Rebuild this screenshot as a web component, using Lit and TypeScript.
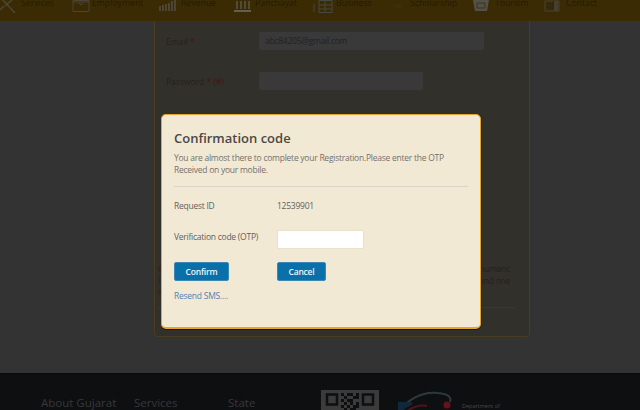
import { LitElement, html, css, svg } from "lit";
import { customElement } from "lit/decorators.js";

const NAV = [
  { label: "Services", iw: 17, icon: svg`<path d="M1 -2 L15 13 M14 -2 L5 6 M0 10 L4 6" fill="none" stroke="#4a4534" stroke-width="1.6"/>` },
  { label: "Employment", iw: 16, icon: svg`<path d="M1 0.5 H17 V11.5 H1 Z M1 2 H17 M7 3 L9 5 L11 3" fill="none" stroke="#4a4534"/>` },
  { label: "Revenue", iw: 18, icon: svg`<path d="M1 11V6 M4 11V5 M7 11V4 M10 11V3 M13 11V1 M16 11V0" fill="none" stroke="#514e40" stroke-width="1.6"/>` },
  { label: "Panchayat", iw: 17, icon: svg`<path d="M3 1V9 M7 1V9 M11 1V9 M15 1V9" fill="none" stroke="#57543f" stroke-width="1.6"/><path d="M0 11H17" stroke="#63604f" stroke-width="2"/>` },
  { label: "Business", iw: 20, icon: svg`<path d="M7 0.5H20V12.5H7Z M7 5H20 M13 0V13 M7 9H20 M2 4V12" fill="none" stroke="#474840"/>` },
  { label: "Scholarship", iw: 16, icon: svg`<path d="M3 6L8 3L13 6L8 9Z" fill="#3f2f07"/>` },
  { label: "Tourism", iw: 19, icon: svg`<path d="M1 0H17L15 11H3Z" fill="#535248"/><path d="M5 3H13V8H5Z" fill="none" stroke="#3c3518"/>` },
  { label: "Contact", iw: 18, icon: svg`<path d="M1 1H15V11H1Z" fill="none" stroke="#474534"/><path d="M9 1V9 M3 4H7 M3 7H7" stroke="#2a2616"/><path d="M10 1H14V11H10Z" fill="#443f2e"/>` },
];

const QR_CELLS = [
  [0,0],[2,0],[3,0],[5,0],[1,1],[4,1],[5,1],[0,2],[2,2],[3,2],[1,3],[3,3],[5,3],[0,4],[2,4],[4,4],[5,4],[1,5],[3,5],[4,5],
];

@customElement("app-root")
export class AppRoot extends LitElement {
  static styles = css`
    :host {
      display: block;
      width: 640px;
      height: 410px;
      font-family: "Open Sans", "Liberation Sans", sans-serif;
    }
    .page {
      position: relative;
      width: 640px;
      height: 410px;
      overflow: hidden;
      background: #333333;
      display: flex;
      flex-direction: column;
    }
    .nav {
      flex: none;
      height: 21px;
      overflow: hidden;
      background: #3b2b04;
      display: grid;
      grid-template-columns: 72px 87px 75px 78px 78px 82px 72px 96px;
    }
    .nav-item {
      display: flex;
      align-items: flex-start;
      gap: 4px;
      height: 14px;
      font-size: 8.7px;
      line-height: 7px;
      color: #221a07;
      white-space: nowrap;
    }
    .nav-item svg {
      flex: none;
      overflow: visible;
    }
    .main {
      flex: none;
      height: 352px;
      display: flex;
      justify-content: flex-start;
      padding-left: 154px;
    }
    .card {
      box-sizing: border-box;
      width: 376px;
      height: 316px;
      background: #32302b;
      border: 1px solid #4a3c1e;
      border-top: 0;
      border-radius: 0 0 4px 4px;
      padding: 11px 12px 0 11px;
      display: flex;
      flex-direction: column;
      color: #222120;
      font-size: 8.5px;
      letter-spacing: -0.25px;
    }
    .field {
      display: grid;
      grid-template-columns: 93px auto;
      justify-content: start;
      align-items: center;
      height: 18px;
      margin-bottom: 22px;
    }
    .field b {
      font-weight: 400;
      letter-spacing: 0;
    }
    .req {
      color: #451410;
    }
    .ghost-input {
      box-sizing: border-box;
      height: 18px;
      width: 225px;
      padding-left: 6px;
      line-height: 18px;
      border-radius: 2px;
      background: #393939;
      color: #222;
    }
    .ghost-input.short {
      width: 164px;
    }
    .notes {
      margin: 151px 0 0 -8px;
      width: 352px;
      line-height: 11.5px;
    }
    .note-line {
      display: flex;
      justify-content: space-between;
    }
    .card hr {
      margin: 9px 2px 0 -8px;
      border: 0;
      border-top: 1px solid #3a3832;
    }
    .footer {
      flex: 1;
      background: #0e0f11;
      border-top: 1px solid #0a0a0a;
      display: flex;
      align-items: flex-start;
      padding: 21px 0 0 41px;
      color: #38383a;
      font-size: 11.5px;
      line-height: 16px;
    }
    .f-col {
      white-space: nowrap;
    }
    .f-about { width: 93px; }
    .f-services { width: 94px; }
    .f-state { width: 93px; }
    .qr {
      flex: none;
      margin-top: -5px;
    }
    .logo {
      flex: none;
      margin-top: -5px;
      margin-left: 15px;
    }
    .dept {
      font-size: 5.5px;
      line-height: 8px;
      margin: 7px 0 0 0;
      color: #4a4a4a;
    }
    .scrim {
      position: absolute;
      inset: 0;
      display: flex;
      justify-content: center;
      align-items: flex-start;
      padding: 114px 0 0 1px;
      box-sizing: border-box;
    }
    .modal {
      box-sizing: border-box;
      width: 320px;
      height: 215px;
      background: #f2e9d5;
      border: 1px solid #e5a52c;
      border-bottom-width: 2px;
      border-radius: 5px;
      box-shadow: 0 1px 0 #141428, 1px 0 0 #2a2414;
      padding: 14px 12px 0 12.5px;
      color: #63605b;
      font-size: 8.5px;
      letter-spacing: -0.25px;
      line-height: 11.5px;
    }
    h2 {
      margin: 0;
      font-size: 13px;
      line-height: 19px;
      font-weight: 600;
      letter-spacing: 0;
      color: #4a4845;
    }
    .intro {
      margin: 4px 0 0;
      color: #75716b;
    }
    .modal hr {
      margin: 11px 0 0;
      border: 0;
      border-top: 1px solid #ddd2c8;
    }
    .form {
      display: grid;
      grid-template-columns: 103px 1fr;
      margin-top: 13px;
      align-items: start;
    }
    .id-row {
      height: 30px;
    }
    .otp-label {
      padding-top: 1px;
    }
    .code {
      box-sizing: border-box;
      display: block;
      width: 87px;
      height: 19px;
      background: #fff;
      border: 1px solid #e9dfcc;
      border-radius: 2px;
      padding: 0;
      margin: 0;
    }
    .btn-cell {
      margin-top: 13px;
    }
    button {
      box-sizing: border-box;
      display: block;
      height: 19px;
      padding: 0;
      border: 1px solid #3d87b4;
      border-radius: 2px;
      background: #0a70a9;
      color: #f4f4f4;
      font: 600 8.5px/17px "Open Sans", "Liberation Sans", sans-serif;
      letter-spacing: -0.2px;
      text-align: center;
    }
    .confirm { width: 55px; }
    .cancel { width: 49px; }
    .resend {
      display: block;
      margin-top: 9px;
      color: #5183b5;
      text-decoration: none;
    }
  `;

  private qr() {
    return html`<svg class="qr" width="58" height="25" viewBox="0 0 58 25">
      <rect width="58" height="25" fill="#3b3b3b"></rect>
      <path d="M6 4.5H16V14.5H6Z M42 4.5H52V14.5H42Z" fill="none" stroke="#0e0f11" stroke-width="2.5"></path>
      ${QR_CELLS.map(
        ([x, y]) => svg`<rect x=${20 + x * 3} y=${3 + y * 3} width="3" height="3" fill="#0e0f11"></rect>`
      )}
      <path d="M20 23H38" stroke="#0e0f11" stroke-width="2" stroke-dasharray="3 2"></path>
    </svg>`;
  }

  private logo() {
    return html`<svg class="logo" width="68" height="25" viewBox="0 0 68 25">
      <path d="M2 25C12 10 28 1 44 3C54 4 58 7 56 12" fill="none" stroke="#2c3a3c" stroke-width="2"></path>
      <path d="M9 25C14 19 24 14 33 16" fill="none" stroke="#4e1318" stroke-width="2"></path>
      <path d="M4 12H18V15C12 17 8 21 5 25H4Z" fill="#10283a"></path>
      <circle cx="53" cy="15" r="3.5" fill="#6a1016"></circle>
    </svg>`;
  }

  render() {
    return html`
      <div class="page">
        <nav class="nav">
          ${NAV.map(
            (n) => html`<div class="nav-item">
              <svg width=${n.iw} height="14" viewBox="0 0 ${n.iw} 14">${n.icon}</svg>
              <span>${n.label}</span>
            </div>`
          )}
        </nav>
        <main class="main">
          <section class="card">
            <div class="field">
              <b>Email <span class="req">*</span></b>
              <div class="ghost-input">abc84205@gmail.com</div>
            </div>
            <div class="field">
              <b>Password <span class="req">* (#)</span></b>
              <div class="ghost-input short"></div>
            </div>
            <div class="notes">
              <div class="note-line"><span class="req">#</span><span>numeric</span></div>
              <div class="note-line"><span>l</span><span>and one</span></div>
              <div class="note-line"><span>s</span><span></span></div>
            </div>
            <hr />
          </section>
        </main>
        <footer class="footer">
          <div class="f-col f-about">About Gujarat</div>
          <div class="f-col f-services">Services</div>
          <div class="f-col f-state">State</div>
          ${this.qr()} ${this.logo()}
          <div class="dept">Department of</div>
        </footer>
        <div class="scrim">
          <div class="modal">
            <h2>Confirmation code</h2>
            <p class="intro">
              You are almost there to complete your Registration.Please enter the OTP<br />Received on your mobile.
            </p>
            <hr />
            <div class="form">
              <div class="id-row">Request ID</div>
              <div class="id-row">12539901</div>
              <div class="otp-label">Verification code (OTP)</div>
              <div><input class="code" type="text" /></div>
              <div class="btn-cell"><button class="confirm">Confirm</button></div>
              <div class="btn-cell"><button class="cancel">Cancel</button></div>
            </div>
            <a class="resend" href="#">Resend SMS....</a>
          </div>
        </div>
      </div>
    `;
  }
}
